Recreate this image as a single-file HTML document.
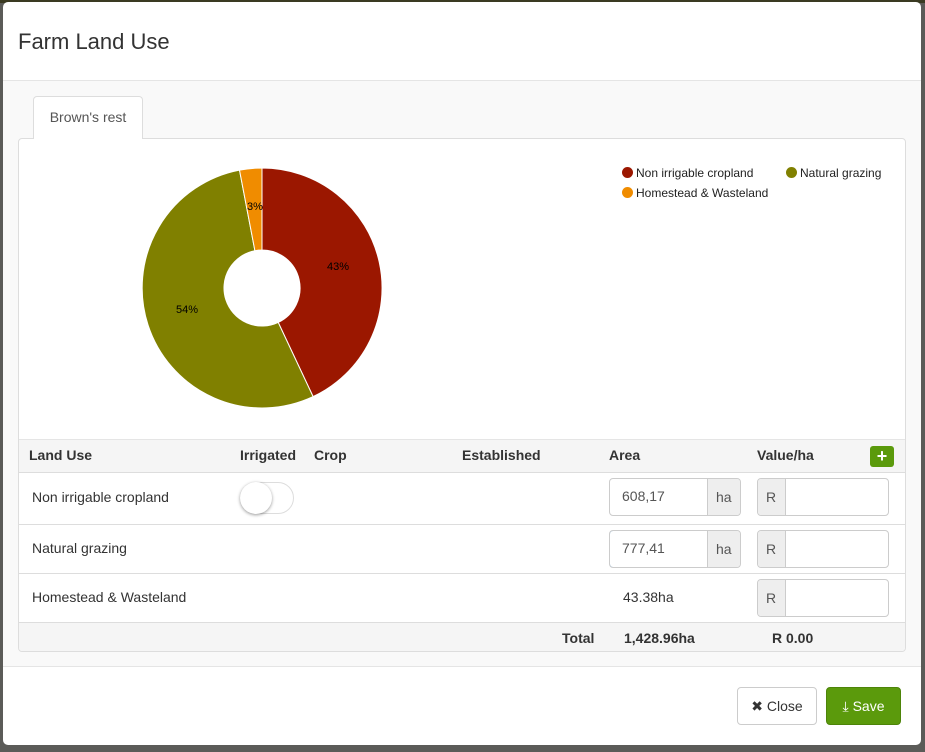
<!DOCTYPE html>
<html><head><meta charset="utf-8"><style>
*{box-sizing:border-box;margin:0;padding:0}
body{width:925px;height:752px;background:#5b5b58;font-family:"Liberation Sans",sans-serif;color:#333;position:relative;overflow:hidden;font-size:14px}
.top{position:absolute;left:0;top:0;width:925px;height:3px;background:#3a3a22}
.modal{position:absolute;left:3px;top:2px;width:918px;height:743px;background:#fff;border-radius:5px;overflow:hidden}
.hdr{height:79px;border-bottom:1px solid #e5e5e5;padding:0 15px}
.hdr h4{font-size:22px;font-weight:normal;line-height:80px;color:#333}
.body{position:absolute;top:79px;left:0;right:0;height:586px;background:#f9f9f9;border-bottom:1px solid #e5e5e5}
.tab{position:absolute;left:30px;top:15px;width:110px;height:43px;background:#fff;border:1px solid #ddd;border-bottom:none;border-radius:4px 4px 0 0;font-size:14px;text-align:center;line-height:40px;color:#555;z-index:2}
.panel{position:absolute;left:15px;top:57px;width:888px;height:514px;background:#fff;border:1px solid #ddd;border-radius:4px;overflow:hidden}
.th{position:absolute;top:300px;left:0;right:0;height:34px;background:#f5f5f5;border-top:1px solid #e5e5e5;border-bottom:1px solid #ddd;font-weight:bold;font-size:14px}
.th span{position:absolute;top:7px}
.row span{position:absolute;top:9px}
.row{position:absolute;left:0;right:0;border-bottom:1px solid #ddd;font-size:14px}
.ig{position:absolute;height:38px;border:1px solid #ccc;border-radius:4px;background:#fff;overflow:hidden}
.ig .a{position:absolute;top:0;bottom:0;background:#eee;color:#555;padding:0 8px;line-height:36px}
.plus{position:absolute;right:11px;top:6px;width:24px;height:21px;background:#5b9a0c;border-radius:3px;color:#fff;text-align:center;line-height:20px;font-size:18px;font-weight:bold}
.btn{position:absolute;top:685px;height:38px;border-radius:4px;font-size:14px;line-height:36px;text-align:center}
.leg{position:absolute;font-size:12px;color:#222}
.leg i{display:inline-block;width:11px;height:11px;border-radius:50%;vertical-align:-1px;margin-right:3px}
</style></head><body>
<div class="top"></div>
<div class="modal">
<div class="hdr"><h4>Farm Land Use</h4></div>
<div class="body">
<div class="tab">Brown's rest</div>
<div class="panel">
<svg style="position:absolute;left:0;top:0" width="600" height="300">
<g transform="translate(-19,-139)">
<path d="M262,168 A120,120 0 0 1 313.1,396.6 L278.2,322.4 A38,38 0 0 0 262,250 Z" fill="#9b1700" stroke="#fff" stroke-width="1"/>
<path d="M313.1,396.6 A120,120 0 1 1 239.5,170.1 L254.9,250.7 A38,38 0 1 0 278.2,322.4 Z" fill="#808000" stroke="#fff" stroke-width="1"/>
<path d="M239.5,170.1 A120,120 0 0 1 262,168 L262,250 A38,38 0 0 0 254.9,250.7 Z" fill="#f08c00" stroke="#fff" stroke-width="1"/>
<text x="338" y="270" font-size="11" text-anchor="middle" font-family="Liberation Sans">43%</text>
<text x="187" y="313" font-size="11" text-anchor="middle" font-family="Liberation Sans">54%</text>
<text x="255" y="210" font-size="11" text-anchor="middle" font-family="Liberation Sans">3%</text>
</g></svg>
<div class="leg" style="left:603px;top:27px"><i style="background:#9b1700"></i>Non irrigable cropland</div>
<div class="leg" style="left:767px;top:27px"><i style="background:#808000"></i>Natural grazing</div>
<div class="leg" style="left:603px;top:47px"><i style="background:#f08c00"></i>Homestead &amp; Wasteland</div>
<div class="th"><span style="left:10px">Land Use</span><span style="left:221px">Irrigated</span><span style="left:295px">Crop</span><span style="left:443px">Established</span><span style="left:590px">Area</span><span style="left:738px">Value/ha</span><div class="plus">+</div></div>
<div class="row" style="top:334px;height:52px"><span style="left:13px;top:16px">Non irrigable cropland</span>
<div style="position:absolute;left:221px;top:9px;width:54px;height:32px;border:1px solid #ddd;border-radius:16px"><div style="position:absolute;left:-1px;top:-1px;width:32px;height:32px;border-radius:50%;background:#fff;box-shadow:0 1px 3px rgba(0,0,0,.4)"></div></div>
<div class="ig" style="left:590px;top:5px;width:132px"><span style="left:12px;top:9px;color:#555">608,17</span><div class="a" style="right:0;width:33px;border-left:1px solid #ccc">ha</div></div>
<div class="ig" style="left:738px;top:5px;width:132px"><div class="a" style="left:0;width:28px;border-right:1px solid #ccc">R</div></div></div>
<div class="row" style="top:386px;height:49px"><span style="left:13px;top:15px">Natural grazing</span>
<div class="ig" style="left:590px;top:5px;width:132px"><div style="position:absolute;left:-1px;top:-1px;width:100px;height:38px;border:1px solid #66afe9;border-radius:4px 0 0 4px;box-shadow:0 0 6px rgba(102,175,233,.5)"></div><span style="left:12px;top:9px;color:#555">777,41</span><div class="a" style="right:0;width:33px;border-left:1px solid #ccc">ha</div></div>
<div class="ig" style="left:738px;top:5px;width:132px"><div class="a" style="left:0;width:28px;border-right:1px solid #ccc">R</div></div></div>
<div class="row" style="top:435px;height:49px"><span style="left:13px;top:15px">Homestead &amp; Wasteland</span><span style="left:604px;top:15px">43.38ha</span>
<div class="ig" style="left:738px;top:5px;width:132px"><div class="a" style="left:0;width:28px;border-right:1px solid #ccc">R</div></div></div>
<div class="row" style="top:484px;height:30px;background:#f5f5f5;border:none;font-weight:bold"><span style="left:543px;top:7px">Total</span><span style="left:605px;top:7px">1,428.96ha</span><span style="left:753px;top:7px">R 0.00</span></div>
</div></div>
<div class="btn" style="left:734px;width:80px;border:1px solid #ccc;background:#fff;color:#333">✖ Close</div>
<div class="btn" style="left:823px;width:75px;background:#5b9a0c;color:#fff;border:1px solid #4d8409">⤓ Save</div>
</div>
</body></html>
